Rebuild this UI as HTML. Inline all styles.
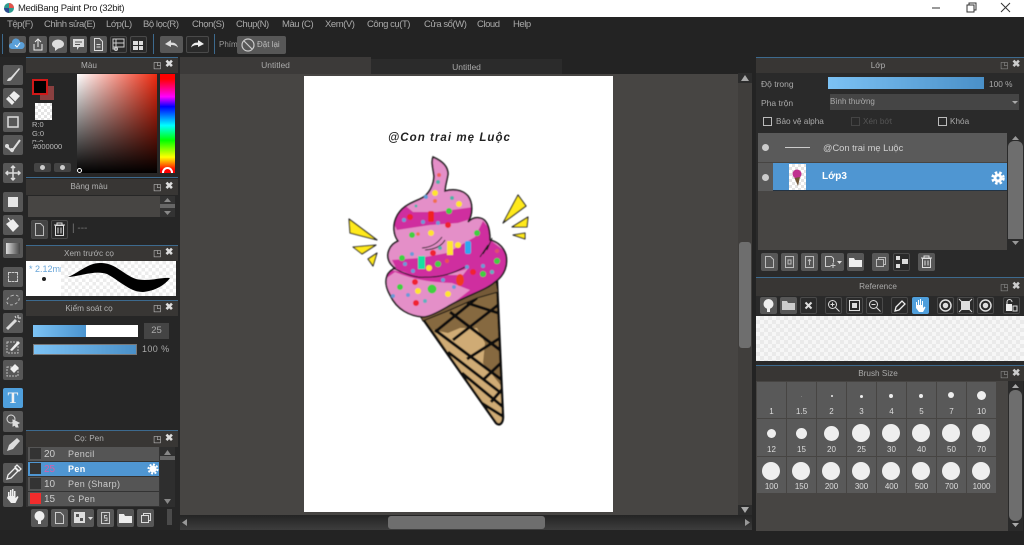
<!DOCTYPE html>
<html><head><meta charset="utf-8"><style>
*{box-sizing:border-box}
html,body{margin:0;padding:0}
body{width:1024px;height:545px;overflow:hidden;position:relative;background:#232323;font-family:"Liberation Sans",sans-serif;font-size:10px;color:#bbb}
div,span,svg{position:absolute}
.t{white-space:nowrap;line-height:12px}
.b{background:#575757;border-radius:2px;width:20px;height:20px}
.d{background:#2a2a2a;border:1px solid #4a4a4a;border-radius:2px;width:17px;height:19px}
.h{background:#383634;height:16px;border-top:1px solid #3d6a8e;text-align:center;line-height:15px;color:#b0b0b0;font-size:8.2px;padding-right:26px}
.w{color:#aaa;font-size:9.5px;letter-spacing:-.45px;top:18px;line-height:14px;white-space:nowrap}
.c{width:29px;background:#595959;text-align:center;color:#ddd;font-size:8px}
.c i{position:absolute;background:#eee;border-radius:50%;display:block}
.c b{position:absolute;left:0;right:0;bottom:1px;font-weight:normal;line-height:10px}
.r{left:2px;width:131px;height:14px;background:#555;color:#ccc;font-size:9px;line-height:15px}
.r i{position:absolute;left:2px;top:1px;width:11px;height:11px;background:#333;display:block}
.r u{position:absolute;left:16px;text-decoration:none;font-size:10px}
.r s{position:absolute;left:40px;text-decoration:none;letter-spacing:.35px}
.ck{background:repeating-conic-gradient(#e4e4e4 0 25%,#fff 0 50%) 0 0/8px 8px}
</style></head><body>

<!-- Title bar -->
<div style="left:0;top:0;width:1024px;height:17px;background:#fff"></div>
<svg style="left:3px;top:2px" width="12" height="12"><circle cx="6" cy="6" r="5" fill="#2f9c8f"/><path d="M6 1a5 5 0 0 1 5 5H6z" fill="#e5534b"/><path d="M1 6a5 5 0 0 0 5 5V6z" fill="#2b4b8f"/></svg>
<div class="t" style="left:18px;top:3px;color:#222;font-size:9.5px;letter-spacing:-.3px">MediBang Paint Pro (32bit)</div>
<svg style="left:930px;top:0" width="94" height="17" fill="none" stroke="#333"><path d="M2 8h8"/><path d="M37 5h7v7h-7zM39 5V3h7v7h-2"/><path d="M71 3l9 9M80 3l-9 9"/></svg>

<!-- Menu -->
<div class="w" style="left:7px">Tệp(F)</div>
<div class="w" style="left:44px">Chỉnh sửa(E)</div>
<div class="w" style="left:106px">Lớp(L)</div>
<div class="w" style="left:143px">Bộ lọc(R)</div>
<div class="w" style="left:192px">Chọn(S)</div>
<div class="w" style="left:236px">Chụp(N)</div>
<div class="w" style="left:282px">Màu (C)</div>
<div class="w" style="left:325px">Xem(V)</div>
<div class="w" style="left:367px">Công cụ(T)</div>
<div class="w" style="left:424px">Cửa sổ(W)</div>
<div class="w" style="left:477px">Cloud</div>
<div class="w" style="left:513px">Help</div>

<!-- Top toolbar -->
<div style="left:2px;top:34px;width:1px;height:20px;background:#3d6a8e"></div>
<div style="left:153px;top:34px;width:1px;height:20px;background:#3d6a8e"></div>
<div style="left:214px;top:34px;width:1px;height:20px;background:#3d6a8e"></div>
<div class="b" style="left:9px;top:36px;width:17px;height:17px"></div>
<svg style="left:9px;top:36px" width="17" height="17"><path d="M3 13a3 3 0 0 1 0-6 4 4 0 0 1 8-1 3.500 3.500 0 0 1 2 7z" fill="#5a9fd8"/><path d="M6 9l2 2 3-4" stroke="#fff" fill="none"/></svg>
<div class="b" style="left:29px;top:36px;width:18px;height:17px"></div>
<svg style="left:29px;top:36px" width="18" height="17" fill="none" stroke="#eee"><path d="M5 8v6h8V8M9 11V3M6 6l3-3 3 3"/></svg>
<div class="b" style="left:49px;top:36px;width:18px;height:17px"></div>
<svg style="left:49px;top:36px" width="18" height="17"><ellipse cx="9" cy="8" rx="6" ry="4.500" fill="#ddd"/><path d="M6 11v4l4-3z" fill="#ddd"/></svg>
<div class="b" style="left:70px;top:36px;width:17px;height:17px"></div>
<svg style="left:70px;top:36px" width="17" height="17"><path d="M3 3h11v8H9l-2 3v-3H3z" fill="#ddd"/><path d="M5 6h7M5 8.500h5" stroke="#555"/></svg>
<div class="b" style="left:90px;top:36px;width:17px;height:17px"></div>
<svg style="left:90px;top:36px" width="17" height="17" fill="none" stroke="#ddd"><path d="M4.500 2.500h5l3 3v9h-8zM6.500 8.500h4M6.500 11h4"/></svg>
<div class="d" style="left:110px;top:36px;height:17px"></div>
<svg style="left:110px;top:36px" width="17" height="17" fill="none" stroke="#ccc"><path d="M3 3h11v4H3zM3 7h11v4H3zM6 3v8M3 11v2h4"/><circle cx="6" cy="13" r="1.500"/></svg>
<div class="d" style="left:130px;top:36px;height:17px"></div>
<svg style="left:130px;top:36px" width="17" height="17" fill="#ddd"><path d="M3 5h5v4H3zM9 5h4v4H9zM3 10h5v4H3zM9 10h4v4H9z"/></svg>
<div class="b" style="left:160px;top:36px;width:23px;height:17px"></div>
<svg style="left:160px;top:36px" width="23" height="17"><path d="M5 8l6-4v2.500c4 0 6 1.500 7 5-2-2-4-2.500-7-2.500V11z" fill="#ddd"/></svg>
<div class="d" style="left:186px;top:36px;width:23px;height:17px"></div>
<svg style="left:186px;top:36px" width="23" height="17"><path d="M18 8l-6-4v2.500c-4 0-6 1.500-7 5 2-2 4-2.500 7-2.500V11z" fill="#eee"/></svg>
<div class="t" style="left:219px;top:39px;color:#999;font-size:8px">Phím</div>
<div class="b" style="left:237px;top:36px;width:49px;height:18px"></div>
<svg style="left:241px;top:38px" width="14" height="14" fill="none" stroke="#ccc" stroke-width="1.200"><circle cx="7" cy="7" r="6"/><path d="M3 3l8 8"/></svg>
<div class="t" style="left:257px;top:39px;color:#bbb;font-size:8px">Đặt lại</div>

<!-- Left tools -->
<div style="left:0;top:57px;width:25px;height:473px;background:#262626"></div>
<div class="b" style="left:3px;top:65px"></div>
<svg style="left:3px;top:65px" width="20" height="20"><path d="M4 16c1-3 2-3 4-4l8-9 1 1-8 10c-1 2-2 2-5 2z" fill="#ddd"/></svg>
<div class="b" style="left:3px;top:88px"></div>
<svg style="left:3px;top:88px" width="20" height="20"><path d="M3 11l8-8 6 5-8 9z" fill="#eee"/><path d="M6 8l6 6" stroke="#555"/></svg>
<div class="b" style="left:3px;top:112px"></div>
<svg style="left:3px;top:112px" width="20" height="20"><rect x="5" y="5" width="10" height="10" fill="none" stroke="#ddd" stroke-width="1.500"/></svg>
<div class="b" style="left:3px;top:135px"></div>
<svg style="left:3px;top:135px" width="20" height="20" fill="#ddd"><path d="M3 11l6 5 8-11" fill="none" stroke="#ddd" stroke-width="2"/><circle cx="4" cy="11" r="2"/><circle cx="9" cy="15" r="2"/></svg>
<div class="b" style="left:3px;top:163px"></div>
<svg style="left:3px;top:163px" width="20" height="20" fill="none" stroke="#ddd" stroke-width="1.500"><path d="M10 3v14M3 10h14M8 5l2-2 2 2M8 15l2 2 2-2M5 8l-2 2 2 2M15 8l2 2-2 2"/></svg>
<div class="b" style="left:3px;top:192px"></div>
<svg style="left:3px;top:192px" width="20" height="20"><rect x="5" y="5" width="10" height="10" fill="#e6e6e6"/></svg>
<div class="b" style="left:3px;top:215px"></div>
<svg style="left:3px;top:215px" width="20" height="20"><path d="M3 9l7-5 6 7-6 6z" fill="#eee"/><path d="M5 3l5 6" stroke="#eee"/></svg>
<div class="b" style="left:3px;top:238px"></div>
<div style="left:6px;top:243px;width:14px;height:11px;background:linear-gradient(90deg,#ddd,#444)"></div>
<div class="b" style="left:3px;top:267px"></div>
<div style="left:8px;top:272px;width:10px;height:10px;border:1px dashed #ccc"></div>
<div class="b" style="left:3px;top:290px"></div>
<div style="left:6px;top:295px;width:14px;height:10px;border:1px dashed #bbb;border-radius:50%;transform:rotate(-25deg)"></div>
<div class="b" style="left:3px;top:313px"></div>
<svg style="left:3px;top:313px" width="20" height="20"><path d="M4 16L13 7" stroke="#ddd" stroke-width="3"/><path d="M15 2v3M18 5h-3M12 3l1 2M17 9l-2-1" stroke="#ddd"/></svg>
<div class="b" style="left:3px;top:337px"></div>
<svg style="left:3px;top:337px" width="20" height="20"><rect x="4" y="5" width="11" height="11" fill="none" stroke="#bbb" stroke-dasharray="2 1"/><path d="M7 13l8-9 2 2-8 8z" fill="#eee"/></svg>
<div class="b" style="left:3px;top:360px"></div>
<svg style="left:3px;top:360px" width="20" height="20"><rect x="4" y="7" width="11" height="9" fill="none" stroke="#bbb" stroke-dasharray="2 1"/><path d="M7 9l5-5 4 4-5 5z" fill="#eee"/></svg>
<div class="b" style="left:3px;top:388px;background:#4f9fdc"></div>
<div class="t" style="left:3px;top:391px;width:20px;text-align:center;color:#f2f2f2;font:bold 16px/15px 'Liberation Serif',serif">T</div>
<div class="b" style="left:3px;top:411px;height:21px"></div>
<svg style="left:3px;top:411px" width="20" height="21" fill="none" stroke="#ddd"><circle cx="8" cy="8" r="4"/><path d="M10 9l6 3-2 1 1 3-2 0-1-2-2 1z" fill="#ddd"/></svg>
<div class="b" style="left:3px;top:435px"></div>
<svg style="left:3px;top:435px" width="20" height="20"><path d="M4 16l2-6 8-7 3 3-7 8z" fill="#ddd"/></svg>
<div class="b" style="left:3px;top:463px"></div>
<svg style="left:3px;top:463px" width="20" height="20"><path d="M4 16l1-4 7-7 3 3-7 7zM12 4l2-2 4 4-2 2z" fill="none" stroke="#eee" stroke-width="1.300"/></svg>
<div class="b" style="left:3px;top:486px;height:21px"></div>
<svg style="left:3px;top:486px" width="20" height="21"><path d="M5 10V6h1.500v4h.5V4h1.500v6h.5V3h1.500v7h.5V5h1.500v7l2-2 1 1-3 6H8l-4-5z" fill="#f0f0f0"/></svg>

<!-- Left panels bg -->
<div style="left:25px;top:57px;width:155px;height:473px;background:#262626"></div>

<!-- Mau -->
<div class="h" style="left:26px;top:57px;width:152px">Màu</div>
<div class="t" style="left:153px;top:59px;color:#ccc;font-size:9px">◳</div>
<div class="t" style="left:165px;top:59px;color:#ddd;font-size:10px;font-weight:bold">✖</div>
<div style="left:40px;top:86px;width:14px;height:14px;background:#8a4040"></div>
<div style="left:32px;top:79px;width:16px;height:16px;background:#000;border:2px solid #d01818"></div>
<div class="ck" style="left:35px;top:103px;width:17px;height:17px;background-size:6px 6px"></div>
<div class="t" style="left:32px;top:120px;font-size:7.500px;line-height:9px;color:#bbb">R:0<br>G:0<br>B:0</div>
<div style="left:26px;top:144px;width:50px;height:3px;background:#262626"></div>
<div class="t" style="left:33px;top:142px;font-size:7.500px;line-height:9px;color:#bbb;background:#262626">#000000</div>
<div class="b" style="left:34px;top:163px;width:17px;height:9px;background:#444"></div>
<div class="b" style="left:54px;top:163px;width:17px;height:9px;background:#444"></div>
<div style="left:40px;top:165px;width:5px;height:5px;background:#ccc;border-radius:50%"></div>
<div style="left:60px;top:165px;width:5px;height:5px;background:#ccc;border-radius:50%"></div>
<div style="left:77px;top:74px;width:80px;height:99px;background:linear-gradient(to bottom,rgba(0,0,0,0),#000),linear-gradient(to right,#fff,#ee2a10)"></div>
<div style="left:77px;top:168px;width:5px;height:5px;border:1px solid #fff;border-radius:50%"></div>
<div style="left:160px;top:74px;width:15px;height:99px;background:linear-gradient(to bottom,#f00 5%,#f0f 23%,#00f 33%,#0ff 52%,#0f0 67%,#ff0 84%,#f00 97%)"></div>
<div style="left:162px;top:167px;width:11px;height:6px;border:2px solid #fff;border-bottom:0;border-radius:6px 6px 0 0"></div>
<div style="left:26px;top:177px;width:152px;height:1px;background:#3d6a8e"></div>

<!-- Bang mau -->
<div class="h" style="left:26px;top:179px;width:152px;height:16px;border-top:0;line-height:16px">Bảng màu</div>
<div class="t" style="left:153px;top:181px;color:#ccc;font-size:9px">◳</div>
<div class="t" style="left:165px;top:181px;color:#ddd;font-weight:bold">✖</div>
<div style="left:28px;top:196px;width:132px;height:21px;background:#474543"></div>
<div style="left:160px;top:196px;width:15px;height:21px;background:#333"></div>
<div style="left:160px;top:204px;width:15px;height:4px;background:#666"></div>
<svg style="left:161px;top:197px" width="13" height="19" fill="#888"><path d="M3 5l3.500-4L10 5zM3 14l3.500 4L10 14z"/></svg>
<div class="d" style="left:31px;top:220px;background:#444"></div>
<svg style="left:31px;top:220px" width="17" height="19" fill="none" stroke="#bbb"><path d="M4.500 3.500h5l3 3v9h-8z"/></svg>
<div class="d" style="left:51px;top:220px"></div>
<svg style="left:51px;top:220px" width="17" height="19" fill="none" stroke="#ddd"><path d="M3 5h11M6 5V3h5v2M4.500 5.500h8v10h-8zM7 7.500v6M10 7.500v6"/></svg>
<div class="t" style="left:72px;top:223px;color:#777">| ---</div>

<!-- Xem truoc -->
<div class="h" style="left:26px;top:245px;width:152px">Xem trước cọ</div>
<div class="t" style="left:153px;top:247px;color:#ccc;font-size:9px">◳</div>
<div class="t" style="left:165px;top:247px;color:#ddd;font-weight:bold">✖</div>
<div style="left:26px;top:261px;width:150px;height:35px;background:repeating-conic-gradient(#ececec 0 25%,#fff 0 50%) 0 0/7px 7px"></div>
<div style="left:26px;top:261px;width:35px;height:35px;background:#fff;overflow:hidden"><span class="t" style="left:3px;top:2px;font-size:9px;color:#6aa6d8">* 2.12mm</span></div>
<div style="left:42px;top:277px;width:4px;height:4px;background:#222;border-radius:50%"></div>
<svg style="left:0;top:0" width="180" height="300"><path d="M68 277C80 272 88 263 100 263 115 262 125 276 136 279 150 282 160 277 170 278 165 285 155 291 143 292 130 292 120 281 107 274 95 270 82 276 68 277z" fill="#000"/></svg>

<!-- Kiem soat -->
<div class="h" style="left:26px;top:300px;width:152px">Kiểm soát cọ</div>
<div class="t" style="left:153px;top:302px;color:#ccc;font-size:9px">◳</div>
<div class="t" style="left:165px;top:302px;color:#ddd;font-weight:bold">✖</div>
<div style="left:33px;top:325px;width:105px;height:12px;background:#fff"></div>
<div style="left:33px;top:325px;width:53px;height:12px;background:linear-gradient(90deg,#7cc2f4,#4a94cf)"></div>
<div style="left:144px;top:323px;width:25px;height:16px;background:#444;color:#aaa;text-align:center;line-height:16px;font-size:9.500px">25</div>
<div style="left:33px;top:344px;width:104px;height:11px;background:linear-gradient(90deg,#7cc2f4,#4a90c8);border:1px solid #777"></div>
<div class="t" style="left:142px;top:343px;color:#aaa;font-size:9px;letter-spacing:.4px">100 %</div>

<!-- Co Pen -->
<div class="h" style="left:26px;top:430px;width:152px;height:17px;line-height:16px">Cọ: Pen</div>
<div class="t" style="left:153px;top:433px;color:#ccc;font-size:9px">◳</div>
<div class="t" style="left:165px;top:433px;color:#ddd;font-weight:bold">✖</div>
<div style="left:26px;top:447px;width:134px;height:60px;overflow:hidden;background:#333">
 <div class="r" style="top:0"><i></i><u>20</u><s>Pencil</s></div>
 <div class="r" style="top:15px;background:#4f96d2;color:#fff;font-weight:bold"><i></i><u style="color:#d85fa8;font-weight:normal">25</u><s>Pen</s></div>
 <div class="r" style="top:30px"><i></i><u>10</u><s>Pen (Sharp)</s></div>
 <div class="r" style="top:45px"><i style="background:#f22c2c"></i><u>15</u><s>G Pen</s></div>
</div>
<svg style="left:147px;top:463px" width="12" height="12"><circle cx="6" cy="6" r="3.500" fill="#fff"/><circle cx="6" cy="6" r="4.500" fill="none" stroke="#fff" stroke-width="2" stroke-dasharray="2 1.500"/></svg>
<div style="left:160px;top:447px;width:15px;height:60px;background:#2e2e2e"></div>
<div style="left:160px;top:456px;width:15px;height:4px;background:#666"></div>
<svg style="left:160px;top:447px" width="15" height="60" fill="#888"><path d="M4 8l3.500-5L11 8zM4 52l3.500 5L11 52z"/></svg>
<div class="b" style="left:31px;top:509px;width:17px;height:18px"></div>
<svg style="left:31px;top:509px" width="17" height="18" fill="#eee"><circle cx="8.500" cy="7" r="5"/><path d="M7 9h3v6H7z"/></svg>
<div class="b" style="left:51px;top:509px;width:17px;height:18px"></div>
<svg style="left:51px;top:509px" width="17" height="18" fill="none" stroke="#ccc"><path d="M4.500 3.500h5l3 3v8h-8z"/></svg>
<div class="b" style="left:71px;top:509px;width:23px;height:18px"></div>
<svg style="left:71px;top:509px" width="23" height="18"><rect x="3" y="3" width="11" height="11" fill="#ddd"/><rect x="5" y="5" width="3" height="3" fill="#555"/><rect x="9" y="9" width="3" height="3" fill="#555"/><path d="M17 8h5l-2.500 3z" fill="#ddd"/></svg>
<div class="b" style="left:97px;top:509px;width:17px;height:18px"></div>
<svg style="left:97px;top:509px" width="17" height="18" fill="none" stroke="#ccc"><path d="M4.500 3.500h8v11h-8z"/><path d="M10 6.500H7.500v2.500H10v2.500H7.500"/></svg>
<div class="b" style="left:117px;top:509px;width:17px;height:18px"></div>
<svg style="left:117px;top:509px" width="17" height="18" fill="#eee"><path d="M2 5h5l1 2h7v7H2z"/></svg>
<div class="b" style="left:137px;top:509px;width:17px;height:18px"></div>
<svg style="left:137px;top:509px" width="17" height="18" fill="none" stroke="#ddd"><path d="M4.500 6.500h7v7h-7zM6.500 6.500v-2h7v7h-2"/></svg>
<div style="left:167px;top:509px;width:5px;height:16px;background:#4a4a4a"></div>

<!-- Tabs and canvas -->
<div style="left:180px;top:57px;width:191px;height:17px;background:#3c3a39;color:#aaa;text-align:center;line-height:17px;font-size:8.500px">Untitled</div>
<div style="left:371px;top:59px;width:191px;height:15px;background:#2b2b2b;color:#aaa;text-align:center;line-height:16px;font-size:8.500px">Untitled</div>
<div style="left:180px;top:74px;width:572px;height:441px;background:#474543"></div>
<div style="left:304px;top:76px;width:309px;height:436px;background:#fff"></div>

<!-- Artwork -->
<svg style="left:0;top:0" width="1024" height="545">
 <defs>
  <path id="ip" d="M433 157C440 160 448 165 448 174 447 181 445 186 445 191 452 189 462 189 468 196 473 203 473 214 468 222 472 218 476 217 480 218 486 219 490 226 490 240 495 241 503 245 506 255 508 265 505 275 495 282 485 291 465 296 447 307 435 314 428 317 423 317 410 316 397 310 390 295 386 288 385 281 387 276 388 272 392 270 395 268 389 264 386 257 389 250 391 245 394 243 398 241 393 234 393 225 396 218 400 208 408 204 420 199 430 195 434 183 434 176 433 168 431 162 433 157z"/>
  <clipPath id="ic"><use href="#ip"/></clipPath>
  <path id="cn" d="M418 312L497 282 503 417C503 424 499 426 496 423z"/>
  <clipPath id="cc"><use href="#cn"/></clipPath>
  <filter id="sf" x="-5%" y="-5%" width="110%" height="110%"><feGaussianBlur stdDeviation=".4"/></filter>
 </defs>
 <g filter="url(#sf)">
 <use href="#cn" fill="#86693f"/>
 <g clip-path="url(#cc)">
  <path d="M433 330L448 333 460 328 477 328 485 343 483 363 502 387 504 417 498 426z" fill="#cfab74"/>
  <g stroke="#0c0c0c" stroke-width="3" fill="none">
   <path d="M435 332L477 298M453 340L498 305M467 359L500 338M483 380L502 362M491 402L504 387"/>
   <path d="M467 303L498 313M450 312L500 350M435 330L502 380M448 352L501 393M462 373L503 407M480 402L504 417"/>
  </g>
 </g>
 <use href="#cn" fill="none" stroke="#0c0c0c" stroke-width="2.400"/>
 <path d="M417 310L423 321 450 310 477 298 498 292 496 281 477 290 447 305 425 315z" fill="#755a38" stroke="#111" stroke-width="1"/>
 <use href="#ip" fill="#e48fc8"/>
 <g clip-path="url(#ic)">
  <path d="M402 203L413 212 437 212 474 207 474 218 458 223 430 225 397 230 392 220 397 212z" fill="#cf2f9f"/>
  <path d="M392 260L420 258 447 253 475 237 483 221 492 232 492 250 473 267 447 275 423 277 397 270z" fill="#cf2f9f"/>
  <path d="M388 270L423 275 463 275 490 240 510 255 500 285 470 300 420 320 385 290z" fill="#cf2f9f"/>
  <path d="M384 280L395 272C415 280 430 282 452 283L470 290 447 308 423 320 385 305z" fill="#e48fc8"/>
 </g>
 <g fill="none" stroke="#1a1a1a" stroke-width="1">
  <path d="M422 248Q435 247 442 237M425 250Q440 249 445 240M487 250L492 238M483 254L490 243M480 257L488 245M393 268Q415 279 425 277 445 278 465 267"/>
 </g>
 <use href="#ip" fill="none" stroke="#1a1a1a" stroke-width="1.600"/>
 <g>
  <circle cx="439" cy="175" r="2" fill="#f0605a"/><circle cx="438" cy="182" r="2" fill="#4fb0a8"/>
  <circle cx="435" cy="193" r="3" fill="#ffe52e"/><circle cx="426" cy="197" r="2" fill="#5f9bd8"/>
  <circle cx="435" cy="201" r="2" fill="#f07050"/><circle cx="452" cy="198" r="2" fill="#4fb0a8"/>
  <circle cx="459" cy="204" r="3" fill="#ffe52e"/><circle cx="416" cy="206" r="1.500" fill="#4fb0a8"/>
  <circle cx="449" cy="211" r="3" fill="#3fd040"/><circle cx="410" cy="217" r="3" fill="#f02030"/>
  <circle cx="404" cy="220" r="2" fill="#6a9ad8"/><rect x="428" y="211" width="6" height="11" rx="2" fill="#f02020"/>
  <circle cx="423" cy="222" r="2" fill="#6a9ad8"/><circle cx="438" cy="223" r="2" fill="#6a9ad8"/>
  <circle cx="448" cy="225" r="3" fill="#f02030"/><circle cx="412" cy="235" r="3" fill="#3fd040"/>
  <circle cx="418" cy="234" r="1.800" fill="#f07050"/><circle cx="431" cy="233" r="3" fill="#ffe52e"/>
  <circle cx="477" cy="233" r="3" fill="#3fd040"/><circle cx="458" cy="245" r="3" fill="#ffe52e"/>
  <rect x="447" y="241" width="6" height="14" fill="#ffe52e"/><rect x="465" y="241" width="6" height="13" rx="2" fill="#2fa8f0"/>
  <circle cx="440" cy="248" r="2" fill="#4fb0a8"/><circle cx="433" cy="253" r="3" fill="#f02030"/>
  <circle cx="412" cy="254" r="2" fill="#6a9ad8"/><circle cx="402" cy="258" r="3" fill="#3fd040"/>
  <circle cx="405" cy="264" r="2" fill="#6a9ad8"/><rect x="418" y="256" width="7" height="13" fill="#18e0a0"/>
  <circle cx="429" cy="268" r="3" fill="#ffe52e"/><circle cx="438" cy="264" r="3" fill="#3fd040"/>
  <circle cx="413" cy="271" r="2" fill="#6a9ad8"/><circle cx="447" cy="261" r="2" fill="#f05050"/>
  <circle cx="497" cy="251" r="2" fill="#e05070"/><circle cx="497" cy="261" r="3" fill="#3fd040"/>
  <circle cx="483" cy="266" r="2" fill="#6a9ad8"/><circle cx="492" cy="272" r="2" fill="#5fb0c0"/>
  <circle cx="483" cy="274" r="3" fill="#3fd040"/><circle cx="473" cy="272" r="3" fill="#f02030"/>
  <circle cx="467" cy="267" r="2" fill="#6a9ad8"/><circle cx="443" cy="280" r="2" fill="#6a9ad8"/>
  <ellipse cx="460" cy="280" rx="4" ry="6" fill="#f03a20"/><circle cx="415" cy="282" r="3" fill="#f02030"/>
  <circle cx="400" cy="287" r="3" fill="#3fd040"/><circle cx="418" cy="291" r="3" fill="#ffe52e"/>
  <circle cx="432" cy="289" r="4.500" fill="#3fd040"/><circle cx="408" cy="295" r="2" fill="#6a9ad8"/>
  <circle cx="393" cy="296" r="2" fill="#6a9ad8"/><circle cx="416" cy="303" r="3" fill="#f02030"/>
  <circle cx="425" cy="301" r="2" fill="#5fb0c0"/><circle cx="448" cy="294" r="3" fill="#ffe52e"/>
  <circle cx="454" cy="287" r="2" fill="#6a9ad8"/>
 </g>
 <g fill="#ffe91a" stroke="#222" stroke-width="1.100" stroke-linejoin="round">
  <path d="M518 195L526 206 503 223z"/><path d="M528 217L527 227 512 227z"/><path d="M525 233L525 239 513 235z"/>
  <path d="M349 219L350 233 377 240z"/><path d="M353 247L376 245 362 254z"/><path d="M377 253L368 259 373 266z"/>
 </g>
 </g>
 <text x="388" y="141" font-family="Liberation Sans" font-size="11.500" font-weight="bold" font-style="italic" letter-spacing="1.050" fill="#222">@Con trai mẹ Luộc</text>
</svg>

<!-- Scrollbars -->
<div style="left:738px;top:74px;width:14px;height:441px;background:#403e3c"></div>
<svg style="left:738px;top:73px" width="14" height="10"><rect width="14" height="10" fill="#2c2c2c"/><path d="M3 8h8L7 2z" fill="#aaa"/></svg>
<div style="left:739px;top:242px;width:12px;height:106px;background:#6e6e6e;border-radius:3px"></div>
<svg style="left:738px;top:505px" width="14" height="10"><rect width="14" height="10" fill="#2c2c2c"/><path d="M3 2h8L7 8z" fill="#aaa"/></svg>
<div style="left:180px;top:515px;width:572px;height:15px;background:linear-gradient(#242424,#3d3d3d)"></div>
<div style="left:388px;top:516px;width:157px;height:13px;background:#6e6e6e;border-radius:3px"></div>
<svg style="left:180px;top:515px" width="572" height="15" fill="#999"><path d="M7 4v7l-5-3.500zM565 4v7l5-3.500z"/></svg>

<!-- Right panel: Lop -->
<div style="left:756px;top:57px;width:268px;height:220px;background:#2a2a2a"></div>
<div class="h" style="left:756px;top:57px;width:268px;padding-right:24px">Lớp</div>
<div class="t" style="left:1000px;top:59px;color:#999;font-size:9px">◳</div>
<div class="t" style="left:1012px;top:59px;color:#ccc;font-weight:bold">✖</div>
<div class="t" style="left:761px;top:78px;color:#aaa;font-size:8.500px">Độ trong</div>
<div style="left:828px;top:77px;width:156px;height:12px;background:linear-gradient(90deg,#7cc2f4,#4a90c8)"></div>
<div class="t" style="left:989px;top:78px;color:#aaa;font-size:8.300px">100 %</div>
<div class="t" style="left:761px;top:97px;color:#aaa;font-size:8.500px">Pha trộn</div>
<div style="left:830px;top:94px;width:189px;height:16px;background:#454545;color:#aaa;line-height:16px;font-size:8px">Bình thường</div>
<div style="left:1012px;top:101px;border:3px solid transparent;border-top-color:#aaa"></div>
<div style="left:763px;top:117px;width:9px;height:9px;border:1px solid #bbb"></div>
<div class="t" style="left:776px;top:116px;color:#aaa;font-size:8.200px">Bảo vệ alpha</div>
<div style="left:851px;top:117px;width:9px;height:9px;border:1px solid #444"></div>
<div class="t" style="left:863px;top:116px;color:#555;font-size:8.200px">Xén bớt</div>
<div style="left:938px;top:117px;width:9px;height:9px;border:1px solid #bbb"></div>
<div class="t" style="left:950px;top:116px;color:#aaa;font-size:8.200px">Khóa</div>
<div style="left:758px;top:133px;width:249px;height:117px;background:#474543"></div>
<div style="left:758px;top:133px;width:249px;height:29px;background:#5a5a5a"></div>
<div style="left:785px;top:147px;width:25px;height:1px;background:#ccc"></div>
<div class="t" style="left:823px;top:142px;color:#d0d0d0;font-size:9.300px">@Con trai mẹ Luộc</div>
<div style="left:762px;top:144px;width:7px;height:7px;background:#ccc;border-radius:50%"></div>
<div style="left:758px;top:163px;width:15px;height:28px;background:#5a5a5a"></div>
<div style="left:773px;top:163px;width:234px;height:28px;background:#4f96d2;border-bottom:1px solid #234"></div>
<div style="left:762px;top:174px;width:7px;height:7px;background:#ccc;border-radius:50%"></div>
<div class="ck" style="left:789px;top:164px;width:17px;height:26px;background-size:6px 6px"></div>
<svg style="left:789px;top:164px" width="17" height="26"><circle cx="8" cy="10" r="4.500" fill="#c0308f"/><path d="M5.500 14L11 13 9 22z" fill="#6f5636"/></svg>
<div class="t" style="left:822px;top:171px;color:#fff;font-size:10px;font-weight:bold">Lớp3</div>
<svg style="left:991px;top:171px" width="14" height="14"><circle cx="7" cy="7" r="4.500" fill="#fff"/><circle cx="7" cy="7" r="5.500" fill="none" stroke="#fff" stroke-width="2.500" stroke-dasharray="2.500 2"/><circle cx="7" cy="7" r="1.500" fill="#4f96d2"/></svg>
<div style="left:1008px;top:133px;width:15px;height:117px;background:#2a2a2a"></div>
<div style="left:1008px;top:141px;width:15px;height:98px;background:#6e6e6e;border-radius:6px 6px 0 0"></div>
<svg style="left:1008px;top:133px" width="15" height="117" fill="#999"><path d="M4 7l3.500-4L11 7zM4 108l3.500 4L11 108z"/></svg>

<!-- Layer toolbar -->
<div class="b" style="left:761px;top:253px;width:17px;height:18px"></div>
<svg style="left:761px;top:253px" width="17" height="18" fill="none" stroke="#bbb"><path d="M4.500 3.500h5l3 3v8h-8z"/></svg>
<div class="b" style="left:781px;top:253px;width:17px;height:18px"></div>
<svg style="left:781px;top:253px" width="17" height="18" fill="none" stroke="#bbb"><path d="M4.500 3.500h8v11h-8zM7 7h3v4H7z"/></svg>
<div class="b" style="left:801px;top:253px;width:17px;height:18px"></div>
<svg style="left:801px;top:253px" width="17" height="18" fill="none" stroke="#bbb"><path d="M4.500 3.500h8v11h-8zM8.500 12V7M7 8l1.500-1.500L10 8"/></svg>
<div class="b" style="left:821px;top:253px;width:23px;height:18px"></div>
<svg style="left:821px;top:253px" width="23" height="18"><path d="M4.500 3.500h6l2 2v4M4.500 3.500v10h5M12 10v5M9.500 12.500h5" fill="none" stroke="#ccc"/><path d="M16 8h5l-2.500 3z" fill="#ddd"/></svg>
<div class="b" style="left:847px;top:253px;width:17px;height:18px"></div>
<svg style="left:847px;top:253px" width="17" height="18" fill="#eee"><path d="M2 5h5l1 2h7v7H2z"/></svg>
<div class="b" style="left:872px;top:253px;width:17px;height:18px"></div>
<svg style="left:872px;top:253px" width="17" height="18" fill="none" stroke="#bbb"><path d="M4.500 6.500h7v7h-7zM6.500 6.500v-2h7v7h-2"/></svg>
<div class="d" style="left:893px;top:253px;height:18px"></div>
<svg style="left:893px;top:253px" width="17" height="18" fill="#ddd"><rect x="3" y="3" width="4" height="4"/><rect x="3" y="11" width="4" height="4"/><rect x="9" y="6" width="6" height="5"/></svg>
<div class="b" style="left:918px;top:253px;width:17px;height:18px"></div>
<svg style="left:918px;top:253px" width="17" height="18" fill="none" stroke="#ddd"><path d="M3 5h11M6 5V3h5v2M4.500 5.500h8v9h-8zM7 7.500v5M10 7.500v5"/></svg>

<!-- Reference -->
<div class="h" style="left:756px;top:277px;width:268px;height:19px;line-height:18px;color:#aaa;padding-right:24px">Reference</div>
<div class="t" style="left:1000px;top:281px;color:#999;font-size:9px">◳</div>
<div class="t" style="left:1012px;top:281px;color:#ccc;font-weight:bold">✖</div>
<div style="left:756px;top:296px;width:268px;height:20px;background:#2a2a2a"></div>
<div class="b" style="left:760px;top:297px;width:17px;height:17px"></div>
<svg style="left:760px;top:297px" width="17" height="17" fill="#eee"><circle cx="8.500" cy="7" r="5"/><path d="M7 9h3v6H7z"/></svg>
<div class="b" style="left:780px;top:297px;width:17px;height:17px"></div>
<svg style="left:780px;top:297px" width="17" height="17" fill="#ccc"><path d="M2 4h5l1 2h7v7H2z"/></svg>
<div class="d" style="left:800px;top:297px;height:17px"></div>
<svg style="left:800px;top:297px" width="17" height="17" stroke="#ddd" stroke-width="2"><path d="M5.500 5.500l6 6M11.500 5.500l-6 6"/></svg>
<div class="d" style="left:825px;top:297px;height:17px"></div>
<svg style="left:825px;top:297px" width="17" height="17" fill="none" stroke="#ddd"><circle cx="7.500" cy="7.500" r="4"/><path d="M10.500 10.500l4 4M5.500 7.500h4M7.500 5.500v4"/></svg>
<div class="d" style="left:846px;top:297px;height:17px"></div>
<svg style="left:846px;top:297px" width="17" height="17" fill="none" stroke="#ddd"><rect x="3.500" y="3.500" width="10" height="10"/><rect x="6.500" y="6.500" width="4" height="4" fill="#ddd"/></svg>
<div class="d" style="left:866px;top:297px;height:17px"></div>
<svg style="left:866px;top:297px" width="17" height="17" fill="none" stroke="#ddd"><circle cx="7.500" cy="7.500" r="4"/><path d="M10.500 10.500l4 4M5.500 7.500h4"/></svg>
<div class="d" style="left:891px;top:297px;height:17px"></div>
<svg style="left:891px;top:297px" width="17" height="17" fill="none" stroke="#eee" stroke-width="1.300"><path d="M4 14l1-4 6-6 3 3-6 6z"/></svg>
<div class="b" style="left:912px;top:297px;width:17px;height:17px;background:#4f9fdc"></div>
<svg style="left:912px;top:297px" width="17" height="17"><path d="M4 9V5h1v3h1V3h1v5h1V2h1v6h1V4h1v7l1.500-1.500 1 1L11 15H7l-3-4z" fill="#fff"/></svg>
<div class="d" style="left:937px;top:297px;height:17px"></div>
<svg style="left:937px;top:297px" width="17" height="17" fill="none" stroke="#ddd" stroke-width="1.500"><circle cx="8.500" cy="8.500" r="5.500"/><circle cx="8.500" cy="8.500" r="2" fill="#ddd"/></svg>
<div class="d" style="left:957px;top:297px;height:17px"></div>
<svg style="left:957px;top:297px" width="17" height="17"><rect x="4" y="4" width="9" height="9" fill="#ddd"/><path d="M2 2l3 3M15 2l-3 3M2 15l3-3M15 15l-3-3" stroke="#ddd"/></svg>
<div class="d" style="left:977px;top:297px;height:17px"></div>
<svg style="left:977px;top:297px" width="17" height="17" fill="none" stroke="#ddd" stroke-width="1.500"><circle cx="8.500" cy="8.500" r="5.500"/><circle cx="8.500" cy="8.500" r="2" fill="#ddd"/></svg>
<div class="d" style="left:1003px;top:297px;height:17px"></div>
<svg style="left:1003px;top:297px" width="17" height="17"><rect x="3" y="7" width="6" height="7" fill="#eee"/><rect x="10" y="9" width="4" height="5" fill="none" stroke="#ddd"/><path d="M4 7V5a2.500 2.500 0 0 1 5 0" fill="none" stroke="#ddd"/></svg>
<div style="left:756px;top:316px;width:268px;height:45px;background:repeating-conic-gradient(#eaeaea 0 25%,#f6f6f6 0 50%) 0 0/8px 8px"></div>
<div style="left:756px;top:361px;width:268px;height:4px;background:#2a2a2a"></div>

<!-- Brush size -->
<div class="h" style="left:756px;top:365px;width:268px;height:16px;line-height:16px;color:#aaa;padding-right:24px">Brush Size</div>
<div class="t" style="left:1000px;top:368px;color:#999;font-size:9px">◳</div>
<div class="t" style="left:1012px;top:368px;color:#ccc;font-weight:bold">✖</div>
<div style="left:756px;top:381px;width:252px;height:150px;background:#474543"></div>

<div class="c" style="left:757px;top:382px;height:36px"><b>1</b></div>
<div class="c" style="left:787px;top:382px;height:36px"><i style="left:14px;top:14px;width:1px;height:1px;background:#888"></i><b>1.5</b></div>
<div class="c" style="left:817px;top:382px;height:36px"><i style="left:14px;top:13px;width:2px;height:2px"></i><b>2</b></div>
<div class="c" style="left:847px;top:382px;height:36px"><i style="left:13px;top:13px;width:3px;height:3px"></i><b>3</b></div>
<div class="c" style="left:877px;top:382px;height:36px"><i style="left:12px;top:12px;width:4px;height:4px"></i><b>4</b></div>
<div class="c" style="left:907px;top:382px;height:36px"><i style="left:12px;top:12px;width:4px;height:4px"></i><b>5</b></div>
<div class="c" style="left:937px;top:382px;height:36px"><i style="left:11px;top:10px;width:6px;height:6px"></i><b>7</b></div>
<div class="c" style="left:967px;top:382px;height:36px"><i style="left:10px;top:9px;width:9px;height:9px"></i><b>10</b></div>

<div class="c" style="left:757px;top:419px;height:37px"><i style="left:10px;top:10px;width:9px;height:9px"></i><b>12</b></div>
<div class="c" style="left:787px;top:419px;height:37px"><i style="left:9px;top:9px;width:11px;height:11px"></i><b>15</b></div>
<div class="c" style="left:817px;top:419px;height:37px"><i style="left:7px;top:7px;width:15px;height:15px"></i><b>20</b></div>
<div class="c" style="left:847px;top:419px;height:37px"><i style="left:5px;top:5px;width:18px;height:18px"></i><b>25</b></div>
<div class="c" style="left:877px;top:419px;height:37px"><i style="left:5px;top:5px;width:18px;height:18px"></i><b>30</b></div>
<div class="c" style="left:907px;top:419px;height:37px"><i style="left:5px;top:5px;width:18px;height:18px"></i><b>40</b></div>
<div class="c" style="left:937px;top:419px;height:37px"><i style="left:5px;top:5px;width:18px;height:18px"></i><b>50</b></div>
<div class="c" style="left:967px;top:419px;height:37px"><i style="left:5px;top:5px;width:18px;height:18px"></i><b>70</b></div>

<div class="c" style="left:757px;top:457px;height:36px"><i style="left:5px;top:5px;width:18px;height:18px"></i><b>100</b></div>
<div class="c" style="left:787px;top:457px;height:36px"><i style="left:5px;top:5px;width:18px;height:18px"></i><b>150</b></div>
<div class="c" style="left:817px;top:457px;height:36px"><i style="left:5px;top:5px;width:18px;height:18px"></i><b>200</b></div>
<div class="c" style="left:847px;top:457px;height:36px"><i style="left:5px;top:5px;width:18px;height:18px"></i><b>300</b></div>
<div class="c" style="left:877px;top:457px;height:36px"><i style="left:5px;top:5px;width:18px;height:18px"></i><b>400</b></div>
<div class="c" style="left:907px;top:457px;height:36px"><i style="left:5px;top:5px;width:18px;height:18px"></i><b>500</b></div>
<div class="c" style="left:937px;top:457px;height:36px"><i style="left:5px;top:5px;width:18px;height:18px"></i><b>700</b></div>
<div class="c" style="left:967px;top:457px;height:36px"><i style="left:5px;top:5px;width:18px;height:18px"></i><b>1000</b></div>

<div style="left:1008px;top:381px;width:15px;height:150px;background:#2a2a2a"></div>
<div style="left:1009px;top:390px;width:13px;height:131px;background:#6e6e6e;border-radius:6px"></div>
<svg style="left:1008px;top:381px" width="15" height="150" fill="#aaa"><path d="M4 7l3.500-4L11 7zM4 142l3.500 4L11 142z"/></svg>

</body></html>
